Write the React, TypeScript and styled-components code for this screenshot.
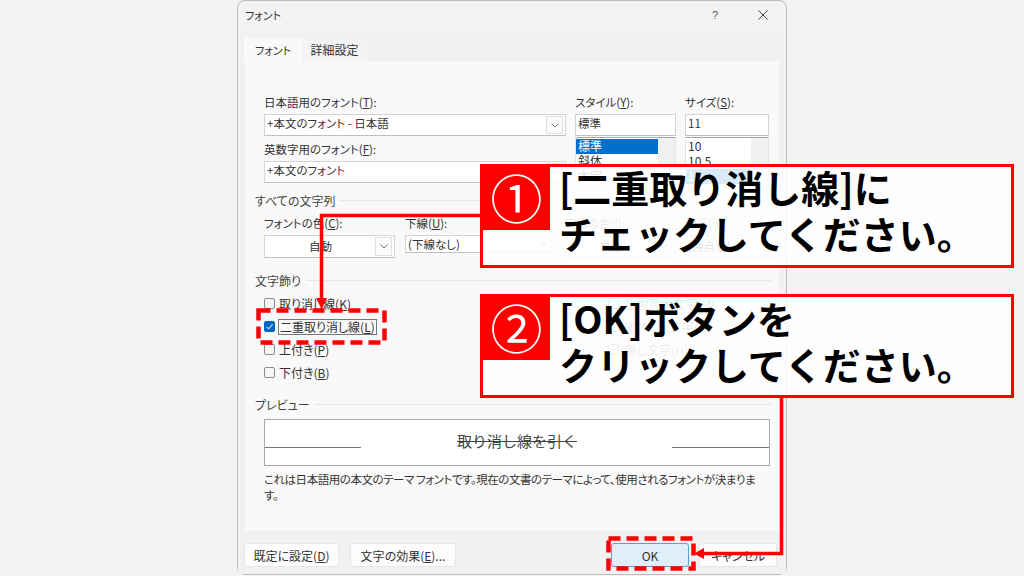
import React from 'react';
import styled, { createGlobalStyle } from 'styled-components';

const GlobalStyle = createGlobalStyle`
  html, body {
    margin: 0;
    padding: 0;
    width: 1024px;
    height: 576px;
    overflow: hidden;
    background: #f3f3f3;
    font-family: "Noto Sans CJK JP", "Liberation Sans", sans-serif;
  }
`;

const Page = styled.div`
  position: relative;
  width: 1024px;
  height: 576px;
  overflow: hidden;
  background: #f3f3f3;
`;

const Dialog = styled.div`
  position: absolute;
  left: 237px;
  top: 0;
  width: 550px;
  height: 575px;
  box-sizing: border-box;
  border: 1px solid #bdbdbd;
  border-radius: 8px;
  background: #f3f3f3;
  display: flex;
  flex-direction: column;
  color: #333;
  font-size: 12px;
  font-feature-settings: "palt";
`;

const TitleBar = styled.div`
  height: 30px;
  flex: none;
  display: flex;
  align-items: center;
  padding: 0 18px 2px 7px;
  box-sizing: border-box;
  font-size: 11px;
`;

const TitleText = styled.span`
  flex: 1;
`;

const HelpMark = styled.span`
  font-family: "Liberation Sans", sans-serif;
  font-size: 11px;
  margin-right: 40px;
  color: #555;
`;

const Body = styled.div`
  flex: 1;
  background: #f1f1f1;
  display: flex;
  flex-direction: column;
  padding: 7px 7px 7px 6px;
  min-height: 0;
`;

const TabRow = styled.div`
  display: flex;
  height: 23px;
  flex: none;
`;

const Tab = styled.div<{ $w: number; $active?: boolean }>`
  width: ${(p) => p.$w}px;
  height: 23px;
  display: flex;
  align-items: center;
  justify-content: center;
  font-size: ${(p) => (p.$active ? 11 : 12)}px;
  background: ${(p) => (p.$active ? '#f9f9f9' : '#f3f3f3')};
`;

const Panel = styled.div`
  flex: 1;
  background: #f9f9f9;
  margin-left: 1px;
  padding: 32px 8px 0 10px;
  min-height: 0;
`;

const FontGrid = styled.div`
  display: grid;
  grid-template-columns: 302px 101px 84px;
  column-gap: 9px;
  padding-left: 9px;
  height: 100px;
`;

const FontCol = styled.div`
  display: flex;
  flex-direction: column;
`;

const Label = styled.div<{ $faint?: boolean }>`
  height: 21px;
  line-height: 18px;
  font-size: 11.5px;
  white-space: nowrap;
  color: ${(p) => (p.$faint ? '#777' : '#333')};
`;

const Key = styled.span`
  text-decoration: underline;
`;

const Field = styled.div<{ $h?: number; $lh?: number; $center?: boolean; $bottom?: number }>`
  position: relative;
  box-sizing: border-box;
  height: ${(p) => p.$h ?? 22}px;
  margin-bottom: ${(p) => p.$bottom ?? 0}px;
  background: #fff;
  border: 1px solid #d4d4d4;
  border-bottom-color: #c0c0c0;
  padding: 0 ${(p) => (p.$center ? 20 : 0)}px 0 2px;
  line-height: ${(p) => p.$lh ?? 16}px;
  font-size: 11.5px;
  text-align: ${(p) => (p.$center ? 'center' : 'left')};
  white-space: nowrap;
`;

const DropButton = styled.span`
  position: absolute;
  right: 2px;
  top: 1px;
  bottom: 1px;
  width: 15px;
  background: #fbfbfb;
  border: 1px solid #e0e0e0;
  display: flex;
  align-items: center;
  justify-content: center;
`;

const ListBox = styled.div`
  margin-top: 1px;
  height: 50px;
  display: flex;
  background: #fff;
  border: 1px solid #e2e2e2;
  border-top-color: #a8a8a8;
  overflow: hidden;
  box-sizing: border-box;
`;

const ListItems = styled.div`
  flex: 1;
  padding-top: 1px;
`;

const ListItem = styled.div<{ $selected?: boolean }>`
  height: 15px;
  line-height: 14px;
  padding-left: 2px;
  font-size: 12px;
  background: ${(p) => (p.$selected ? '#0070cc' : 'transparent')};
  color: ${(p) => (p.$selected ? '#fff' : '#333')};
`;

const ScrollTrack = styled.div`
  width: 17px;
  background: #f0f0f0;
`;

const Section = styled.div<{ $top: number }>`
  margin-top: ${(p) => p.$top}px;
`;

const SectionHead = styled.div`
  display: flex;
  align-items: center;
  gap: 5px;
  height: 16px;
  box-sizing: border-box;
  padding-bottom: 2px;
  font-size: 12px;
  color: #444;

  &::after {
    content: '';
    flex: 1;
    height: 1px;
    background: #e6e6e6;
  }
`;

const SelectRow = styled.div`
  display: grid;
  grid-template-columns: 131px 150px 110px 100px;
  column-gap: 10px;
  padding-left: 9px;
  margin-top: 5px;
  height: 44px;
`;

const SelectCol = styled.div`
  display: flex;
  flex-direction: column;
`;

const EffectsGrid = styled.div`
  display: grid;
  grid-template-columns: 344px 1fr;
  padding-left: 9px;
  margin-top: 3px;
`;

const EffectsCol = styled.div`
  display: flex;
  flex-direction: column;
`;

const CheckRow = styled.div<{ $faint?: boolean }>`
  height: 23px;
  display: flex;
  align-items: center;
  gap: ${(p) => (p.$faint ? 6 : 4)}px;
  font-size: 12px;
  white-space: nowrap;
  color: ${(p) => (p.$faint ? '#777' : '#333')};
`;

const CheckBox = styled.span<{ $checked?: boolean }>`
  width: 11px;
  height: 11px;
  flex: none;
  box-sizing: border-box;
  border-radius: 2px;
  border: 1px solid ${(p) => (p.$checked ? '#0067c0' : '#8b8b8b')};
  background: ${(p) => (p.$checked ? '#0067c0' : '#f6f6f6')};
  display: flex;
  align-items: center;
  justify-content: center;
`;

const FocusLabel = styled.span`
  border: 1px solid #777;
  margin-left: -1px;
  padding: 0 1px;
  line-height: 14px;
`;

const PreviewBox = styled.div`
  position: relative;
  margin: 6px 0 0 9px;
  width: 506px;
  height: 47px;
  box-sizing: border-box;
  background: #fff;
  border: 1px solid #a9a9a9;
  display: flex;
  align-items: center;
  justify-content: center;
  padding-bottom: 5px;
  font-size: 15px;
  font-feature-settings: normal;
`;

const PreviewRule = styled.span<{ $side: 'left' | 'right' }>`
  position: absolute;
  ${(p) => p.$side}: 0;
  top: 27px;
  width: ${(p) => (p.$side === 'left' ? 96 : 97)}px;
  height: 1px;
  background: #777;
`;

const Struck = styled.span`
  text-decoration: line-through;
  color: #444;
`;

const PreviewNote = styled.p`
  margin: 5px 0 0 9px;
  font-size: 11.5px;
  letter-spacing: -0.45px;
  line-height: 16px;
  white-space: nowrap;
  color: #333;
`;

const ButtonRow = styled.div`
  height: 24px;
  flex: none;
  display: flex;
  margin-top: 12px;
`;

const Button = styled.div<{ $w: number; $gap?: number; $primary?: boolean }>`
  width: ${(p) => p.$w}px;
  margin-right: ${(p) => p.$gap ?? 0}px;
  box-sizing: border-box;
  display: flex;
  align-items: center;
  justify-content: center;
  font-size: 12px;
  border-radius: 3px;
  background: ${(p) => (p.$primary ? '#e0eef9' : '#fdfdfd')};
  border: 1px solid ${(p) => (p.$primary ? '#5d9fd6' : '#e6e6e6')};
`;

const Callout = styled.div<{ $top: number }>`
  position: absolute;
  left: 480px;
  top: ${(p) => p.$top}px;
  width: 534px;
  height: 104px;
  box-sizing: border-box;
  border: 3px solid #ff0000;
  background: rgba(255, 255, 255, 0.85);
  padding-left: 76px;
  color: #000;
  font-size: 38px;
  line-height: 46px;
  font-weight: 700;
  white-space: nowrap;
`;

const CalloutText = styled.div<{ $shift: number }>`
  margin-top: ${(p) => p.$shift}px;
`;

const CalloutBadge = styled.div`
  position: absolute;
  left: 0;
  top: 0;
  width: 67px;
  height: 63px;
  background: #ff0000;
  color: #fff;
  font-size: 52px;
  font-weight: 400;
  line-height: 59px;
  text-align: center;
`;

const DashedBox = styled.div<{ $x: number; $y: number; $w: number; $h: number }>`
  position: absolute;
  left: ${(p) => p.$x}px;
  top: ${(p) => p.$y}px;
  width: ${(p) => p.$w}px;
  height: ${(p) => p.$h}px;
`;

const ArrowLayer = styled.svg`
  position: absolute;
  left: 0;
  top: 0;
  pointer-events: none;
`;

const Chevron = () => (
  <svg width="8" height="5" viewBox="0 0 8 5">
    <path d="M0.5 0.5 L4 4 L7.5 0.5" fill="none" stroke="#777" strokeWidth="1" />
  </svg>
);

const Tick = () => (
  <svg width="9" height="9" viewBox="0 0 9 9">
    <path d="M1.5 4.8 L3.6 6.8 L7.6 2.4" fill="none" stroke="#cfe4f7" strokeWidth="1.1" />
  </svg>
);

const CloseIcon = () => (
  <svg width="10" height="10" viewBox="0 0 10 10">
    <path d="M0.5 0.5 L9.5 9.5 M9.5 0.5 L0.5 9.5" stroke="#444" strokeWidth="1" />
  </svg>
);

const App: React.FC = () => (
  <Page>
    <GlobalStyle />
    <Dialog>
      <TitleBar>
        <TitleText>フォント</TitleText>
        <HelpMark>?</HelpMark>
        <CloseIcon />
      </TitleBar>
      <Body>
        <TabRow>
          <Tab $w={58} $active>フォント</Tab>
          <Tab $w={65}>詳細設定</Tab>
        </TabRow>
        <Panel>
          <FontGrid>
            <FontCol>
              <Label>日本語用のフォント(<Key>T</Key>):</Label>
              <Field $bottom={4}>
                +本文のフォント - 日本語
                <DropButton><Chevron /></DropButton>
              </Field>
              <Label>英数字用のフォント(<Key>F</Key>):</Label>
              <Field>
                +本文のフォント
                <DropButton><Chevron /></DropButton>
              </Field>
            </FontCol>
            <FontCol>
              <Label>スタイル(<Key>Y</Key>):</Label>
              <Field>標準</Field>
              <ListBox>
                <ListItems>
                  <ListItem $selected>標準</ListItem>
                  <ListItem>斜体</ListItem>
                  <ListItem>太字</ListItem>
                </ListItems>
                <ScrollTrack />
              </ListBox>
            </FontCol>
            <FontCol>
              <Label>サイズ(<Key>S</Key>):</Label>
              <Field>11</Field>
              <ListBox>
                <ListItems>
                  <ListItem>10</ListItem>
                  <ListItem>10.5</ListItem>
                  <ListItem $selected>11</ListItem>
                </ListItems>
                <ScrollTrack />
              </ListBox>
            </FontCol>
          </FontGrid>

          <Section $top={0}>
            <SectionHead>すべての文字列</SectionHead>
            <SelectRow>
              <SelectCol>
                <Label>フォントの色(<Key>C</Key>):</Label>
                <Field $h={23} $lh={20} $center>
                  自動
                  <DropButton><Chevron /></DropButton>
                </Field>
              </SelectCol>
              <SelectCol>
                <Label>下線(<Key>U</Key>):</Label>
                <Field $h={18} $lh={17}>
                  (下線なし)
                  <DropButton><Chevron /></DropButton>
                </Field>
              </SelectCol>
              <SelectCol>
                <Label $faint>下線の色(I):</Label>
                <Field $h={23} $lh={20} $center>
                  自動
                  <DropButton><Chevron /></DropButton>
                </Field>
              </SelectCol>
              <SelectCol>
                <Label $faint>傍点(:)</Label>
                <Field $h={23} $lh={20}>
                  (傍点なし)
                  <DropButton><Chevron /></DropButton>
                </Field>
              </SelectCol>
            </SelectRow>
          </Section>

          <Section $top={15}>
            <SectionHead>文字飾り</SectionHead>
            <EffectsGrid>
              <EffectsCol>
                <CheckRow><CheckBox /><span>取り消し線(<Key>K</Key>)</span></CheckRow>
                <CheckRow>
                  <CheckBox $checked><Tick /></CheckBox>
                  <FocusLabel>二重取り消し線(<Key>L</Key>)</FocusLabel>
                </CheckRow>
                <CheckRow><CheckBox /><span>上付き(<Key>P</Key>)</span></CheckRow>
                <CheckRow><CheckBox /><span>下付き(<Key>B</Key>)</span></CheckRow>
              </EffectsCol>
              <EffectsCol>
                <CheckRow $faint><CheckBox /><span>小型英大文字(M)</span></CheckRow>
                <CheckRow $faint><CheckBox /><span>すべて大文字(A)</span></CheckRow>
                <CheckRow $faint><CheckBox /><span>隠し文字(H)</span></CheckRow>
              </EffectsCol>
            </EffectsGrid>
          </Section>

          <Section $top={13}>
            <SectionHead>プレビュー</SectionHead>
            <PreviewBox>
              <PreviewRule $side="left" />
              <Struck>取り消し線を引く</Struck>
              <PreviewRule $side="right" />
            </PreviewBox>
            <PreviewNote>
              これは日本語用の本文のテーマ フォントです。現在の文書のテーマによって、使用されるフォントが決まりま<br />す。
            </PreviewNote>
          </Section>
        </Panel>
        <ButtonRow>
          <Button $w={95} $gap={11}>既定に設定(<Key>D</Key>)</Button>
          <Button $w={106} $gap={155}>文字の効果(<Key>E</Key>)...</Button>
          <Button $w={78} $gap={10} $primary>OK</Button>
          <Button $w={78}>キャンセル</Button>
        </ButtonRow>
      </Body>
    </Dialog>

    <Callout $top={164}>
      <CalloutBadge>①</CalloutBadge>
      <CalloutText $shift={-3}>[二重取り消し線]に<br />チェックしてください。</CalloutText>
    </Callout>
    <Callout $top={294}>
      <CalloutBadge>②</CalloutBadge>
      <CalloutText $shift={-2}>[OK]ボタンを<br />クリックしてください。</CalloutText>
    </Callout>

    <ArrowLayer width="1024" height="576" viewBox="0 0 1024 576">
      <path d="M482 215.5 H321.5 V302" fill="none" stroke="#ff0000" strokeWidth="3.5" />
      <path d="M316 298 L327 298 L321.5 309 Z" fill="#ff0000" />
      <path d="M781.5 397 V553.5 H702" fill="none" stroke="#ff0000" strokeWidth="3.5" />
      <path d="M704 548 L704 559 L694 553.5 Z" fill="#ff0000" />
    </ArrowLayer>

    <DashedBox $x={256} $y={308} $w={131} $h={37}>
      <svg width="131" height="37" viewBox="0 0 131 37">
        <rect x="2.5" y="2.5" width="126" height="32" fill="none" stroke="#ff0000" strokeWidth="4.5" strokeDasharray="12 6" />
      </svg>
    </DashedBox>
    <DashedBox $x={606} $y={536} $w={90} $h={35}>
      <svg width="90" height="35" viewBox="0 0 90 35">
        <rect x="2.5" y="2.5" width="85" height="30" fill="none" stroke="#ff0000" strokeWidth="4.5" strokeDasharray="12 6" />
      </svg>
    </DashedBox>
  </Page>
);

export default App;
